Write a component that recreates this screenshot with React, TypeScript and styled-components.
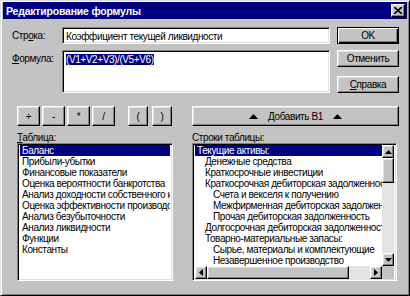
import React from 'react';
import styled, { createGlobalStyle, css } from 'styled-components';

const GlobalStyle = createGlobalStyle`
  html, body { margin: 0; padding: 0; background: #fff; }
  body {
    font-family: "Liberation Sans", Arial, sans-serif;
    font-size: 10px;
    letter-spacing: -0.4px;
    color: #000;
  }
`;

const raised = css`
  border: 1px solid;
  border-color: #fff #000 #000 #fff;
  box-shadow: inset -1px -1px #808080, inset 1px 1px #dfdfdf;
  background: #c3c3c3;
`;

const sunken = css`
  border: 1px solid;
  border-color: #808080 #fff #fff #808080;
  box-shadow: inset 1px 1px #000, inset -1px -1px #dfdfdf;
  background: #fff;
`;

const Window = styled.div`
  box-sizing: border-box;
  width: 410px;
  height: 296px;
  background: #c3c3c3;
  border: 1px solid;
  border-color: #dfdfdf #000 #000 #dfdfdf;
  box-shadow: inset 1px 1px #fff, inset -1px -1px #808080;
  padding: 1px 2px 2px 2px;
  display: flex;
  flex-direction: column;
`;

const TitleBar = styled.div`
  height: 17px;
  background: #000080;
  display: flex;
  align-items: center;
  justify-content: space-between;
  padding: 0 2px 0 3px;
  color: #fff;
  font-weight: bold;
  font-size: 10.5px;
  letter-spacing: -0.2px;
`;

const CloseButton = styled.div`
  ${raised};
  box-sizing: border-box;
  width: 14px;
  height: 13px;
  display: flex;
  align-items: center;
  justify-content: center;
  color: #000;
`;

const Body = styled.div`
  display: flex;
  flex-direction: column;
  padding: 8px 6px 0 9px;
`;

const Top = styled.div`
  display: flex;
  gap: 7px;
`;

const Fields = styled.div`
  width: 318px;
  display: flex;
  flex-direction: column;
  gap: 6px;
`;

const FieldRow = styled.div`
  display: flex;
  align-items: flex-start;
`;

const Label = styled.div<{ $pt?: number }>`
  width: 50px;
  flex: none;
  padding-top: ${(p) => p.$pt ?? 3}px;
`;

const Input = styled.div<{ $h: number }>`
  ${sunken};
  box-sizing: border-box;
  flex: 1;
  height: ${(p) => p.$h}px;
  padding: 3px 3px;
  white-space: nowrap;
  overflow: hidden;
`;

const Selected = styled.span`
  background: #000080;
  color: #fff;
`;

const Side = styled.div`
  width: 62px;
  display: flex;
  flex-direction: column;
`;

const Button = styled.div<{ $default?: boolean; $mt?: number }>`
  ${raised};
  box-sizing: border-box;
  height: 17px;
  margin-top: ${(p) => p.$mt ?? 0}px;
  display: flex;
  align-items: center;
  justify-content: center;
  gap: 10px;
  ${(p) =>
    p.$default &&
    css`
      border-color: #000;
      box-shadow: inset 1px 1px #fff, inset -1px -1px #000, inset -2px -2px #808080;
    `}
`;

const Bottom = styled.div`
  display: flex;
  gap: 19px;
  margin: 13px 0 0 5px;
`;

const Column = styled.div<{ $w: number }>`
  width: ${(p) => p.$w}px;
  display: flex;
  flex-direction: column;
`;

const OpRow = styled.div`
  display: flex;
  gap: 2px;
  height: 20px;
`;

const OpButton = styled(Button)<{ $w?: number; $ml?: number }>`
  width: ${(p) => p.$w ?? 23}px;
  height: 20px;
  margin-left: ${(p) => p.$ml ?? 0}px;
`;

const ListLabel = styled.div`
  margin: 6px 0 0 0;
  height: 11px;
`;

const ListBox = styled.div`
  ${sunken};
  box-sizing: border-box;
  height: 138px;
  padding: 1px 2px;
  overflow: hidden;
  display: flex;
  flex-direction: column;
`;

const ScrollList = styled.div`
  ${sunken};
  box-sizing: border-box;
  height: 138px;
  width: 205px;
  padding: 1px 2px;
  display: grid;
  grid-template-columns: 1fr 12px;
  grid-template-rows: 1fr 13px;
`;

const Items = styled.div`
  overflow: hidden;
`;

const Item = styled.div<{ $active?: boolean; $level?: number }>`
  height: 11px;
  line-height: 11px;
  white-space: nowrap;
  overflow: hidden;
  padding-left: ${(p) => 2 + (p.$level ?? 0) * 8}px;
  background: ${(p) => (p.$active ? '#000080' : 'transparent')};
  color: ${(p) => (p.$active ? '#fff' : '#000')};
`;

const VScroll = styled.div`
  display: flex;
  flex-direction: column;
  background: #e3e3e3;
`;

const HScroll = styled.div`
  display: flex;
  background: #e3e3e3;
`;

const ScrollBtn = styled.div<{ $w: number; $h: number }>`
  ${raised};
  box-sizing: border-box;
  width: ${(p) => p.$w}px;
  height: ${(p) => p.$h}px;
  flex: none;
  display: flex;
  align-items: center;
  justify-content: center;
`;

const Thumb = styled.div<{ $w?: number; $h?: number }>`
  ${raised};
  box-sizing: border-box;
  flex: none;
  width: ${(p) => (p.$w ? `${p.$w}px` : 'auto')};
  height: ${(p) => (p.$h ? `${p.$h}px` : 'auto')};
`;

const Spacer = styled.div`
  flex: 1;
`;

const Corner = styled.div`
  background: #c3c3c3;
`;

const Arrow = ({ dir }: { dir: 'up' | 'down' | 'left' | 'right' }) => {
  const pts = {
    up: '0,4 3.5,0 7,4',
    down: '0,0 3.5,4 7,0',
    left: '4,0 0,3.5 4,7',
    right: '0,0 4,3.5 0,7',
  }[dir];
  const vertical = dir === 'up' || dir === 'down';
  return (
    <svg width={vertical ? 7 : 4} height={vertical ? 4 : 7}>
      <polygon points={pts} fill="#000" />
    </svg>
  );
};

const Tri = () => (
  <svg width="9" height="5">
    <polygon points="0,5 4.5,0 9,5" fill="#000" />
  </svg>
);

const tables = [
  'Баланс',
  'Прибыли-убытки',
  'Финансовые показатели',
  'Оценка вероятности банкротства',
  'Анализ доходности собственного капитала',
  'Оценка эффективности производства',
  'Анализ безубыточности',
  'Анализ ликвидности',
  'Функции',
  'Константы',
];

const rows: [string, number][] = [
  ['Текущие активы:', 0],
  ['Денежные средства', 1],
  ['Краткосрочные инвестиции', 1],
  ['Краткосрочная дебиторская задолженность', 1],
  ['Счета и векселя к получению', 2],
  ['Межфирменная дебиторская задолженность', 2],
  ['Прочая дебиторская задолженность', 2],
  ['Долгосрочная дебиторская задолженность', 1],
  ['Товарно-материальные запасы:', 1],
  ['Сырье, материалы и комплектующие', 2],
  ['Незавершенное производство', 2],
  ['Готовая продукция', 2],
];

export default function App() {
  return (
    <>
      <GlobalStyle />
      <Window>
        <TitleBar>
          <span>Редактирование формулы</span>
          <CloseButton>
            <svg width="8" height="7">
              <path d="M0 0 L8 7 M8 0 L0 7" stroke="#000" strokeWidth="1.6" />
            </svg>
          </CloseButton>
        </TitleBar>
        <Body>
          <Top>
            <Fields>
              <FieldRow>
                <Label>
                  Стр<u>о</u>ка:
                </Label>
                <Input $h={17}>Коэффициент текущей ликвидности</Input>
              </FieldRow>
              <FieldRow>
                <Label $pt={3}>
                  <u>Ф</u>ормула:
                </Label>
                <Input $h={43}>
                  <Selected>(V1+V2+V3)/(V5+V6)</Selected>
                </Input>
              </FieldRow>
            </Fields>
            <Side>
              <Button $default>OK</Button>
              <Button $mt={6}>Отменить</Button>
              <Button $mt={9}>
                <span>
                  <u>С</u>правка
                </span>
              </Button>
            </Side>
          </Top>
          <Bottom>
            <Column $w={156}>
              <OpRow>
                <OpButton>+</OpButton>
                <OpButton>-</OpButton>
                <OpButton>*</OpButton>
                <OpButton>/</OpButton>
                <OpButton $w={20} $ml={11}>
                  (
                </OpButton>
                <OpButton $w={20} $ml={2}>
                  )
                </OpButton>
              </OpRow>
              <ListLabel>
                <u>Т</u>аблица:
              </ListLabel>
              <ListBox>
                <Items>
                  {tables.map((t, i) => (
                    <Item key={t} $active={i === 0}>
                      {t}
                    </Item>
                  ))}
                </Items>
              </ListBox>
            </Column>
            <Column $w={207}>
              <OpRow>
                <OpButton $w={207}>
                  <Tri />
                  <span>Добавить B1</span>
                  <Tri />
                </OpButton>
              </OpRow>
              <ListLabel>Строки таблицы:</ListLabel>
              <ScrollList>
                <Items>
                  {rows.map(([t, l], i) => (
                    <Item key={t} $active={i === 0} $level={l}>
                      {t}
                    </Item>
                  ))}
                </Items>
                <VScroll>
                  <ScrollBtn $w={12} $h={13}>
                    <Arrow dir="up" />
                  </ScrollBtn>
                  <Thumb $h={25} />
                  <Spacer />
                  <ScrollBtn $w={12} $h={13}>
                    <Arrow dir="down" />
                  </ScrollBtn>
                </VScroll>
                <HScroll>
                  <ScrollBtn $w={12} $h={13}>
                    <Arrow dir="left" />
                  </ScrollBtn>
                  <Thumb $w={142} />
                  <Spacer />
                  <ScrollBtn $w={12} $h={13}>
                    <Arrow dir="right" />
                  </ScrollBtn>
                </HScroll>
                <Corner />
              </ScrollList>
            </Column>
          </Bottom>
        </Body>
      </Window>
    </>
  );
}
